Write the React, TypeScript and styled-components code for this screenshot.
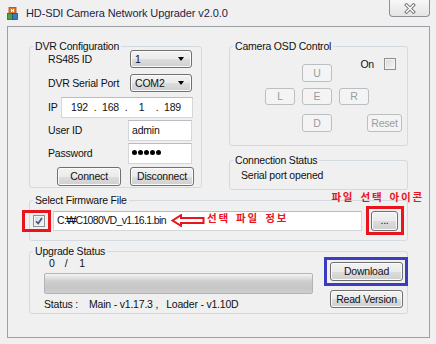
import React from "react";
import styled, { createGlobalStyle } from "styled-components";

const UI_FONT = `"Liberation Sans", "Noto Sans CJK KR", Arial, sans-serif`;
const KR_FONT = `"Noto Sans CJK KR", "Liberation Sans", sans-serif`;

const GlobalStyle = createGlobalStyle`
  html, body { margin: 0; padding: 0; background: #f0f0f0; }
  body { font-family: ${UI_FONT}; }
  * { box-sizing: border-box; }
`;

const Window = styled.div`
  width: 436px;
  height: 344px;
  background: #f0f0f0;
  display: flex;
  flex-direction: column;
  font-family: ${UI_FONT};
  font-size: 10.5px;
  letter-spacing: -0.2px;
  color: #111;
  overflow: hidden;
`;

const TitleBar = styled.div`
  height: 26px;
  flex: none;
  display: flex;
  align-items: flex-start;
  padding-left: 7px;
`;

const AppIcon = styled.svg`
  flex: none;
  margin-top: 7px;
`;

const Title = styled.div`
  margin-left: 8px;
  margin-top: 6px;
  font-size: 11px;
  letter-spacing: -0.1px;
  line-height: 14px;
  color: #1e1e46;
  white-space: nowrap;
`;

const CloseButton = styled.div`
  margin-left: auto;
  margin-right: 6px;
  width: 41px;
  height: 17px;
  border: 1px solid #8e9093;
  border-top: none;
  border-radius: 0 0 4px 4px;
  background: linear-gradient(#f8f8f8, #e4e4e4);
  display: flex;
  align-items: center;
  justify-content: center;
`;

const ClientPanel = styled.div`
  height: 312px;
  margin: 0 6px 0 7px;
  border: 1px solid #9ca0a4;
  padding: 19px 0 0 21px;
  display: flex;
  flex-direction: column;
`;

const TopRow = styled.div`
  display: flex;
  gap: 27px;
  align-items: flex-start;
`;

const Column = styled.div`
  display: flex;
  flex-direction: column;
`;

const Group = styled.div<{ $w: number; $h: number; $mt?: number }>`
  position: relative;
  width: ${(p) => p.$w}px;
  height: ${(p) => p.$h}px;
  margin-top: ${(p) => p.$mt ?? 0}px;
  border: 1px solid #d3dae0;
  border-radius: 3px;
  flex: none;
`;

const Legend = styled.span`
  position: absolute;
  top: -7px;
  left: 3px;
  padding: 0 2px;
  line-height: 13px;
  background: #f0f0f0;
  white-space: nowrap;
`;

const FormBody = styled.div`
  display: flex;
  flex-direction: column;
  padding: 3px 0 0 18px;
`;

const FormRow = styled.div<{ $mt: number; $h: number; $pl?: number; $gap?: number }>`
  display: flex;
  align-items: center;
  height: ${(p) => p.$h}px;
  margin-top: ${(p) => p.$mt}px;
  padding-left: ${(p) => p.$pl ?? 0}px;
  gap: ${(p) => p.$gap ?? 0}px;
`;

const Label = styled.span<{ $w: number }>`
  width: ${(p) => p.$w}px;
  flex: none;
  white-space: nowrap;
  line-height: 13px;
`;

const Select = styled.div<{ $w: number; $h: number }>`
  width: ${(p) => p.$w}px;
  height: ${(p) => p.$h}px;
  border: 1px solid #707070;
  border-radius: 3px;
  background: linear-gradient(#f2f2f2 0%, #ebebeb 50%, #dddddd 51%, #cfcfcf 100%);
  box-shadow: inset 0 0 0 1px #fbfbfb;
  display: flex;
  align-items: center;
  padding: 0 7px 0 4px;
  line-height: 13px;
`;

const SelectValue = styled.span`
  flex: 1;
`;

const DropArrow = styled.span`
  width: 0;
  height: 0;
  border-left: 3.5px solid transparent;
  border-right: 3.5px solid transparent;
  border-top: 4px solid #000;
`;

const TextField = styled.div<{ $w: number; $h: number; $pl?: number; $ml?: number }>`
  width: ${(p) => p.$w}px;
  height: ${(p) => p.$h}px;
  margin-left: ${(p) => p.$ml ?? 0}px;
  border: 1px solid #d3d7dc;
  border-top-color: #b9bdc3;
  background: #fff;
  display: flex;
  align-items: center;
  padding-left: ${(p) => p.$pl ?? 3}px;
  line-height: 13px;
  white-space: nowrap;
  position: relative;
`;

const FileName = styled.span`
  letter-spacing: -0.65px;
`;

const IpCell = styled.span<{ $w: number }>`
  width: ${(p) => p.$w}px;
  text-align: center;
  flex: none;
`;

const Dots = styled.span`
  display: flex;
  gap: 1px;
  margin-top: -2px;
`;

const Dot = styled.span`
  width: 5px;
  height: 5px;
  border-radius: 50%;
  background: #000;
`;

const Button = styled.button<{ $w: number; $h: number }>`
  width: ${(p) => p.$w}px;
  height: ${(p) => p.$h}px;
  flex: none;
  border: 1px solid #707070;
  border-radius: 3px;
  background: linear-gradient(#f2f2f2 0%, #ebebeb 50%, #dddddd 51%, #cfcfcf 100%);
  box-shadow: inset 0 0 0 1px #fbfbfb;
  font-family: ${UI_FONT};
  font-size: 10.5px;
  letter-spacing: -0.2px;
  color: #111;
  padding: 0;
  line-height: 13px;
  &:disabled {
    border-color: #bcbfc2;
    background: #f4f4f4;
    box-shadow: none;
    color: #9c9c9c;
  }
`;

const DPad = styled.div`
  display: grid;
  grid-template-columns: 30px 7px 30px 7px 28px 2px 33px;
  grid-template-rows: 18px 6px 17px 9px 18px;
  padding: 17px 0 0 35px;
`;

const PadButton = styled(Button)<{ $col: string; $row: string }>`
  grid-column: ${(p) => p.$col};
  grid-row: ${(p) => p.$row};
  width: auto;
  height: auto;
`;

const OnToggle = styled.div`
  grid-column: 5 / span 3;
  grid-row: 1;
  justify-self: end;
  align-self: start;
  margin-top: -6px;
  margin-right: 6px;
  display: flex;
  align-items: center;
  gap: 10px;
`;

const CheckBox = styled.span`
  width: 12px;
  height: 12px;
  flex: none;
  border: 1px solid #8e8f8f;
  background: linear-gradient(135deg, #d9d9d9, #f7f7f7);
  box-shadow: inset 0 0 0 1px #f4f4f4;
  display: inline-flex;
  align-items: center;
  justify-content: center;
`;

const StatusLine = styled.div`
  padding: 8px 0 0 11px;
  line-height: 13px;
`;

const FileRow = styled.div`
  display: flex;
  align-items: center;
  height: 100%;
  padding-left: 3px;
`;

const Marked = styled.span<{ $color: string; $t: number; $r: number; $b: number; $l: number; $ml?: number }>`
  position: relative;
  display: inline-flex;
  flex: none;
  margin-left: ${(p) => p.$ml ?? 0}px;
  &::after {
    content: "";
    position: absolute;
    top: -${(p) => p.$t}px;
    right: -${(p) => p.$r}px;
    bottom: -${(p) => p.$b}px;
    left: -${(p) => p.$l}px;
    border: 3px solid ${(p) => p.$color};
    pointer-events: none;
  }
`;

const NoteText = styled.span`
  font-family: ${KR_FONT};
  font-size: 10.5px;
  font-weight: 700;
  letter-spacing: 1.8px;
  word-spacing: 2px;
  color: #e8141e;
  line-height: 14px;
  white-space: nowrap;
`;

const NoteAbove = styled(NoteText)`
  position: absolute;
  bottom: calc(100% + 7px);
  right: -26px;
`;

const FieldNote = styled.span`
  position: absolute;
  left: 117px;
  top: 0;
  height: 100%;
  display: flex;
  align-items: center;
  gap: 2px;
`;

const FieldNoteText = styled(NoteText)`
  margin-top: -5px;
`;

const UpgradeBody = styled.div`
  display: flex;
  padding-left: 14px;
`;

const UpgradeLeft = styled.div`
  width: 269px;
  display: flex;
  flex-direction: column;
`;

const Counter = styled.div`
  display: flex;
  gap: 10px;
  padding-left: 5px;
  margin-top: 5px;
  line-height: 13px;
`;

const CounterTotal = styled.span`
  margin-left: 2px;
`;

const Progress = styled.div`
  height: 21px;
  margin-top: 3px;
  border: 1px solid #b4b4b4;
  border-radius: 2px;
  background: linear-gradient(#f4f4f4 0%, #e2e2e2 18%, #cdcdcd 40%, #c6c6c6 75%, #d0d0d0 100%);
`;

const StatusRow = styled.div`
  display: flex;
  margin-top: 4px;
  line-height: 13px;
  white-space: nowrap;
`;

const StatusPart = styled.span<{ $ml?: number }>`
  margin-left: ${(p) => p.$ml ?? 0}px;
`;

const UpgradeRight = styled.div`
  display: flex;
  flex-direction: column;
  margin-left: 17px;
  padding-top: 10px;
  gap: 9px;
`;

export default function App() {
  return (
    <>
      <GlobalStyle />
      <Window>
        <TitleBar>
          <AppIcon width="11" height="13" viewBox="0 0 11 13">
            <rect x="2" y="0.5" width="7" height="6" fill="#e8782a" stroke="#a84a10" strokeWidth="0.8" />
            <rect x="4" y="2" width="1" height="3" fill="#fff" />
            <rect x="6" y="2" width="1" height="3" fill="#fff" />
            <rect x="4" y="3" width="3" height="1" fill="#fff" />
            <rect x="0.5" y="6.5" width="5" height="6" fill="#4aa63c" stroke="#2a6a22" strokeWidth="0.8" />
            <rect x="5.5" y="6.5" width="5" height="6" fill="#3a78c8" stroke="#1e4a8a" strokeWidth="0.8" />
          </AppIcon>
          <Title>HD-SDI Camera Network Upgrader v2.0.0</Title>
          <CloseButton>
            <svg width="12" height="11" viewBox="0 0 12 11">
              <path d="M2.5 2 L9.5 9 M9.5 2 L2.5 9" stroke="#7a7d80" strokeWidth="3.4" strokeLinecap="square" />
              <path d="M2.5 2 L9.5 9 M9.5 2 L2.5 9" stroke="#ffffff" strokeWidth="1.4" strokeLinecap="square" />
            </svg>
          </CloseButton>
        </TitleBar>

        <ClientPanel>
          <TopRow>
            <Group $w={173} $h={142}>
              <Legend>DVR Configuration</Legend>
              <FormBody>
                <FormRow $mt={0} $h={18}>
                  <Label $w={82}>RS485 ID</Label>
                  <Select $w={62} $h={18}>
                    <SelectValue>1</SelectValue>
                    <DropArrow />
                  </Select>
                </FormRow>
                <FormRow $mt={6} $h={18}>
                  <Label $w={82}>DVR Serial Port</Label>
                  <Select $w={62} $h={18}>
                    <SelectValue>COM2</SelectValue>
                    <DropArrow />
                  </Select>
                </FormRow>
                <FormRow $mt={5} $h={21}>
                  <Label $w={13}>IP</Label>
                  <TextField $w={132} $h={21} $pl={5}>
                    <IpCell $w={25}>192</IpCell>
                    <IpCell $w={6}>.</IpCell>
                    <IpCell $w={25}>168</IpCell>
                    <IpCell $w={6}>.</IpCell>
                    <IpCell $w={25}>1</IpCell>
                    <IpCell $w={6}>.</IpCell>
                    <IpCell $w={25}>189</IpCell>
                  </TextField>
                </FormRow>
                <FormRow $mt={2} $h={21}>
                  <Label $w={80}>User ID</Label>
                  <TextField $w={64} $h={21} $pl={3}>admin</TextField>
                </FormRow>
                <FormRow $mt={2} $h={21}>
                  <Label $w={80}>Password</Label>
                  <TextField $w={64} $h={21} $pl={3}>
                    <Dots>
                      <Dot />
                      <Dot />
                      <Dot />
                      <Dot />
                      <Dot />
                    </Dots>
                  </TextField>
                </FormRow>
                <FormRow $mt={3} $h={19} $pl={9} $gap={9}>
                  <Button $w={64} $h={19}>Connect</Button>
                  <Button $w={64} $h={19}>Disconnect</Button>
                </FormRow>
              </FormBody>
            </Group>

            <Column>
              <Group $w={179} $h={100}>
                <Legend>Camera OSD Control</Legend>
                <DPad>
                  <PadButton $w={0} $h={0} $col="3" $row="1" disabled>U</PadButton>
                  <OnToggle>
                    <span>On</span>
                    <CheckBox />
                  </OnToggle>
                  <PadButton $w={0} $h={0} $col="1" $row="3" disabled>L</PadButton>
                  <PadButton $w={0} $h={0} $col="3" $row="3" disabled>E</PadButton>
                  <PadButton $w={0} $h={0} $col="5 / span 2" $row="3" disabled>R</PadButton>
                  <PadButton $w={0} $h={0} $col="3" $row="5" disabled>D</PadButton>
                  <PadButton $w={0} $h={0} $col="6 / span 2" $row="5" disabled>Reset</PadButton>
                </DPad>
              </Group>
              <Group $w={179} $h={30} $mt={14}>
                <Legend>Connection Status</Legend>
                <StatusLine>Serial port opened</StatusLine>
              </Group>
            </Column>
          </TopRow>

          <Group $w={379} $h={41} $mt={10}>
            <Legend>Select Firmware File</Legend>
            <FileRow>
              <Marked $color="#e8141e" $t={5} $r={6} $b={5} $l={11}>
                <CheckBox>
                  <svg width="8" height="8" viewBox="0 0 8 8">
                    <path d="M1 4.2 L3.2 6.5 L7 1" fill="none" stroke="#3d4f92" strokeWidth="1.6" />
                  </svg>
                </CheckBox>
              </Marked>
              <TextField $w={309} $h={20} $pl={3} $ml={8}>
                <FileName>C:₩C1080VD_v1.16.1.bin</FileName>
                <FieldNote>
                  <svg width="34" height="13" viewBox="0 0 34 13">
                    <path d="M1.5 6.5 L10 1.2 L10 4 L32.5 4 L32.5 9 L10 9 L10 11.8 Z" fill="none" stroke="#e8141e" strokeWidth="2" strokeLinejoin="miter" />
                  </svg>
                  <FieldNoteText>선택 파일 정보</FieldNoteText>
                </FieldNote>
              </TextField>
              <Marked $color="#e8141e" $t={5} $r={6} $b={4} $l={5} $ml={9}>
                <NoteAbove>파일 선택 아이콘</NoteAbove>
                <Button $w={27} $h={20}>...</Button>
              </Marked>
            </FileRow>
          </Group>

          <Group $w={379} $h={63} $mt={10}>
            <Legend>Upgrade Status</Legend>
            <UpgradeBody>
              <UpgradeLeft>
                <Counter>
                  <span>0</span>
                  <span>/</span>
                  <CounterTotal>1</CounterTotal>
                </Counter>
                <Progress />
                <StatusRow>
                  <StatusPart>Status :</StatusPart>
                  <StatusPart $ml={11}>Main - v1.17.3 ,</StatusPart>
                  <StatusPart $ml={8}>Loader - v1.10D</StatusPart>
                </StatusRow>
              </UpgradeLeft>
              <UpgradeRight>
                <Marked $color="#3c3cc0" $t={5} $r={5} $b={5} $l={6}>
                  <Button $w={73} $h={19}>Download</Button>
                </Marked>
                <Button $w={73} $h={18}>Read Version</Button>
              </UpgradeRight>
            </UpgradeBody>
          </Group>
        </ClientPanel>
      </Window>
    </>
  );
}
